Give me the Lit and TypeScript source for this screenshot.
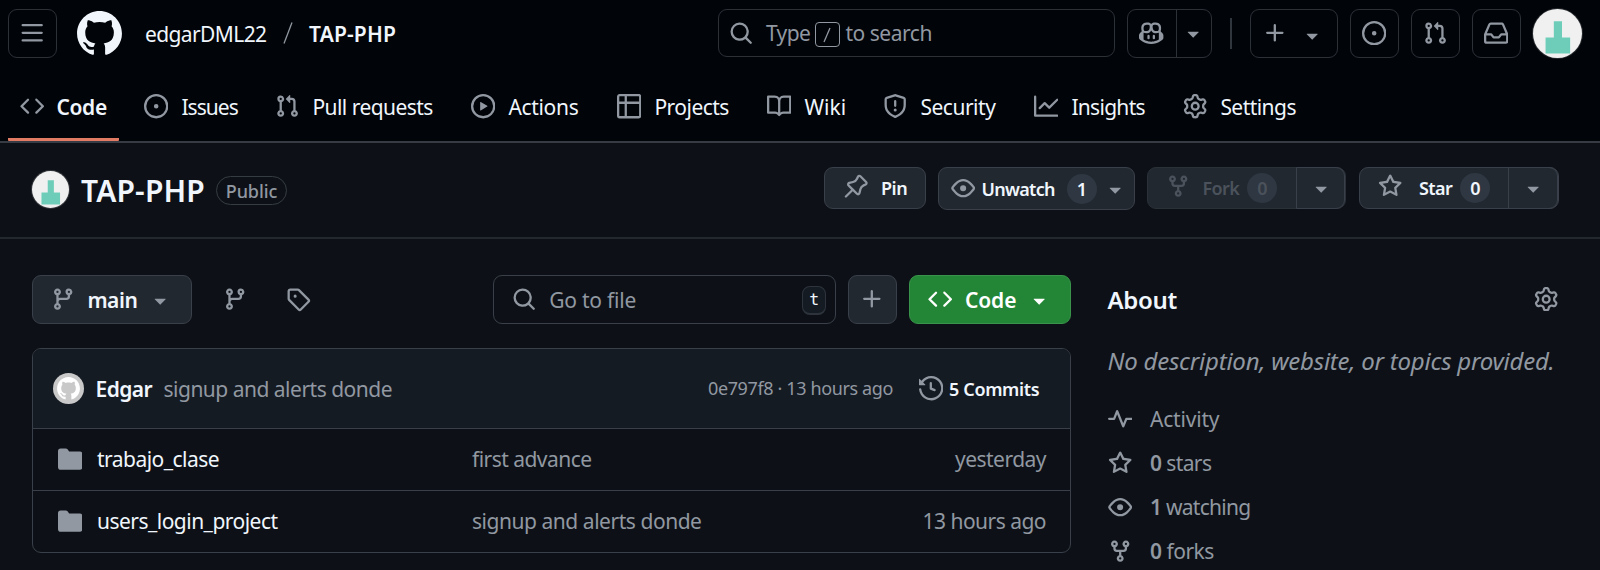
import { LitElement, html, css, svg } from "lit";
import { customElement, property } from "lit/decorators.js";

const ICONS: Record<string, string> = {
  bars: "M1 2.75A.75.75 0 0 1 1.75 2h12.5a.75.75 0 0 1 0 1.5H1.75A.75.75 0 0 1 1 2.75Zm0 5A.75.75 0 0 1 1.75 7h12.5a.75.75 0 0 1 0 1.5H1.75A.75.75 0 0 1 1 7.75ZM1.75 12h12.5a.75.75 0 0 1 0 1.5H1.75a.75.75 0 0 1 0-1.5Z",
  search: "M10.68 11.74a6 6 0 0 1-7.922-8.982 6 6 0 0 1 8.982 7.922l3.04 3.04a.749.749 0 0 1-.326 1.275.749.749 0 0 1-.734-.215ZM11.5 7a4.499 4.499 0 1 0-8.997 0A4.499 4.499 0 0 0 11.5 7Z",
  copilot: "M7.998 15.035c-4.562 0-7.873-2.914-7.998-3.749V9.338c.085-.628.677-1.686 1.588-2.065.013-.07.024-.143.036-.218.029-.183.06-.384.126-.612-.201-.508-.254-1.084-.254-1.656 0-.87.128-1.769.693-2.484.579-.733 1.494-1.124 2.724-1.261 1.206-.134 2.262.034 2.944.765.05.053.096.108.139.165.044-.057.094-.112.143-.165.682-.731 1.738-.899 2.944-.765 1.23.137 2.145.528 2.724 1.261.566.715.693 1.614.693 2.484 0 .572-.053 1.148-.254 1.656.066.228.098.429.126.612.012.076.024.148.037.218.924.385 1.522 1.471 1.591 2.095v1.872c0 .766-3.351 3.795-8.002 3.795Zm0-1.485c2.28 0 4.584-1.11 5.002-1.433V7.862l-.023-.116c-.49.21-1.075.291-1.727.291-1.146 0-2.059-.327-2.71-.991A3.222 3.222 0 0 1 8 6.303a3.24 3.24 0 0 1-.544.743c-.65.664-1.563.991-2.71.991-.652 0-1.236-.081-1.727-.291l-.023.116v4.255c.419.323 2.722 1.433 5.002 1.433ZM6.762 2.83c-.193-.206-.637-.413-1.682-.297-1.019.113-1.479.404-1.713.7-.247.312-.369.789-.369 1.554 0 .793.129 1.171.308 1.371.162.181.519.379 1.442.379.853 0 1.339-.235 1.638-.54.315-.322.527-.827.617-1.553.117-.935-.037-1.395-.241-1.614Zm4.155-.297c-1.044-.116-1.488.091-1.681.297-.204.219-.359.679-.242 1.614.091.726.303 1.231.618 1.553.299.305.784.54 1.638.54.922 0 1.28-.198 1.442-.379.179-.2.308-.578.308-1.371 0-.765-.123-1.242-.37-1.554-.233-.296-.693-.587-1.713-.7ZM6.25 9.037a.75.75 0 0 1 .75.75v1.501a.75.75 0 0 1-1.5 0V9.787a.75.75 0 0 1 .75-.75Zm4.25.75v1.501a.75.75 0 0 1-1.5 0V9.787a.75.75 0 0 1 1.5 0Z",
  caret: "m4.427 7.427 3.396 3.396a.25.25 0 0 0 .354 0l3.396-3.396A.25.25 0 0 0 11.396 7H4.604a.25.25 0 0 0-.177.427Z",
  plus: "M7.75 2a.75.75 0 0 1 .75.75V7h4.25a.75.75 0 0 1 0 1.5H8.5v4.25a.75.75 0 0 1-1.5 0V8.5H2.75a.75.75 0 0 1 0-1.5H7V2.75A.75.75 0 0 1 7.75 2Z",
  issue: "M8 9.5a1.5 1.5 0 1 0 0-3 1.5 1.5 0 0 0 0 3ZM8 0a8 8 0 1 1 0 16A8 8 0 0 1 8 0ZM1.5 8a6.5 6.5 0 1 0 13 0 6.5 6.5 0 0 0-13 0Z",
  pr: "M1.5 3.25a2.25 2.25 0 1 1 3 2.122v5.256a2.251 2.251 0 1 1-1.5 0V5.372A2.25 2.25 0 0 1 1.5 3.25Zm5.677-.177L9.573.677A.25.25 0 0 1 10 .854V2.5h1A2.5 2.5 0 0 1 13.5 5v5.628a2.251 2.251 0 1 1-1.5 0V5a1 1 0 0 0-1-1h-1v1.646a.25.25 0 0 1-.427.177L7.177 3.427a.25.25 0 0 1 0-.354ZM3.75 2.5a.75.75 0 1 0 0 1.5.75.75 0 0 0 0-1.5Zm0 9.5a.75.75 0 1 0 0 1.5.75.75 0 0 0 0-1.5Zm8.25.75a.75.75 0 1 0 1.5 0 .75.75 0 0 0-1.5 0Z",
  inbox: "M2.8 2.06A1.75 1.75 0 0 1 4.41 1h7.18c.7 0 1.333.417 1.61 1.06l2.74 6.395c.04.093.06.194.06.295v4.5A1.75 1.75 0 0 1 14.25 15H1.75A1.75 1.75 0 0 1 0 13.25v-4.5c0-.101.02-.202.06-.295Zm1.61.44a.25.25 0 0 0-.23.152L1.887 8H4.75a.75.75 0 0 1 .6.3L6.625 10h2.75l1.275-1.7a.75.75 0 0 1 .6-.3h2.863L11.82 2.652a.25.25 0 0 0-.23-.152Zm10.09 7h-2.875l-1.275 1.7a.75.75 0 0 1-.6.3h-3.5a.75.75 0 0 1-.6-.3L4.375 9.5H1.5v3.75c0 .138.112.25.25.25h12.5a.25.25 0 0 0 .25-.25Z",
  code: "m11.28 3.22 4.25 4.25a.75.75 0 0 1 0 1.06l-4.25 4.25a.749.749 0 0 1-1.275-.326.749.749 0 0 1 .215-.734L13.94 8l-3.72-3.72a.749.749 0 0 1 .326-1.275.749.749 0 0 1 .734.215Zm-6.56 0a.751.751 0 0 1 1.042.018.751.751 0 0 1 .018 1.042L2.06 8l3.72 3.72a.749.749 0 0 1-.326 1.275.749.749 0 0 1-.734-.215L.47 8.53a.75.75 0 0 1 0-1.06Z",
  play: "M8 0a8 8 0 1 1 0 16A8 8 0 0 1 8 0ZM1.5 8a6.5 6.5 0 1 0 13 0 6.5 6.5 0 0 0-13 0Zm4.879-2.773 4.264 2.559a.25.25 0 0 1 0 .428l-4.264 2.559A.25.25 0 0 1 6 10.559V5.442a.25.25 0 0 1 .379-.215Z",
  table: "M0 1.75C0 .784.784 0 1.75 0h12.5C15.216 0 16 .784 16 1.75v12.5A1.75 1.75 0 0 1 14.25 16H1.75A1.75 1.75 0 0 1 0 14.25ZM6.5 6.5v8h7.75a.25.25 0 0 0 .25-.25V6.5Zm8-1.5V1.75a.25.25 0 0 0-.25-.25H6.5V5Zm-13 1.5v7.75c0 .138.112.25.25.25H5v-8ZM5 5V1.5H1.75a.25.25 0 0 0-.25.25V5Z",
  book: "M0 1.75A.75.75 0 0 1 .75 1h4.253c1.227 0 2.317.59 3 1.501A3.743 3.743 0 0 1 11.006 1h4.245a.75.75 0 0 1 .75.75v10.5a.75.75 0 0 1-.75.75h-4.507a2.25 2.25 0 0 0-1.591.659l-.622.621a.75.75 0 0 1-1.06 0l-.622-.621A2.25 2.25 0 0 0 5.258 13H.75a.75.75 0 0 1-.75-.75Zm7.251 10.324.004-5.073-.002-2.253A2.25 2.25 0 0 0 5.003 2.5H1.5v9h3.757a3.75 3.75 0 0 1 1.994.574ZM8.755 4.75l-.004 7.322a3.752 3.752 0 0 1 1.992-.572H14.5v-9h-3.495a2.25 2.25 0 0 0-2.25 2.25Z",
  shield: "M7.467.133a1.748 1.748 0 0 1 1.066 0l5.25 1.68A1.75 1.75 0 0 1 15 3.48V7c0 1.566-.32 3.182-1.303 4.682-.983 1.498-2.585 2.813-5.032 3.855a1.697 1.697 0 0 1-1.33 0c-2.447-1.042-4.049-2.357-5.032-3.855C1.32 10.182 1 8.566 1 7V3.48a1.75 1.75 0 0 1 1.217-1.667Zm.61 1.429a.25.25 0 0 0-.153 0l-5.25 1.68a.25.25 0 0 0-.174.238V7c0 1.358.275 2.666 1.057 3.86.784 1.194 2.121 2.34 4.366 3.297a.196.196 0 0 0 .154 0c2.245-.956 3.582-2.104 4.366-3.298C13.225 9.666 13.5 8.36 13.5 7V3.48a.251.251 0 0 0-.174-.237l-5.25-1.68ZM8.75 4.75v3a.75.75 0 0 1-1.5 0v-3a.75.75 0 0 1 1.5 0ZM9 10.5a1 1 0 1 1-2 0 1 1 0 0 1 2 0Z",
  graph: "M1.5 1.75V13.5h13.75a.75.75 0 0 1 0 1.5H.75a.75.75 0 0 1-.75-.75V1.75a.75.75 0 0 1 1.5 0Zm14.28 2.53-5.25 5.25a.75.75 0 0 1-1.06 0L7 7.06 4.28 9.78a.751.751 0 0 1-1.042-.018.751.751 0 0 1-.018-1.042l3.25-3.25a.75.75 0 0 1 1.06 0L10 7.94l4.72-4.72a.751.751 0 0 1 1.042.018.751.751 0 0 1 .018 1.042Z",
  gear: "M8 0a8.2 8.2 0 0 1 .701.031C9.444.095 9.99.645 10.16 1.29l.288 1.107c.018.066.079.158.212.224.231.114.454.243.668.386.123.082.233.09.299.071l1.103-.303c.644-.176 1.392.021 1.82.63.27.385.506.792.704 1.218.315.675.111 1.422-.364 1.891l-.814.806c-.049.048-.098.147-.088.294.016.257.016.515 0 .772-.01.147.038.246.088.294l.814.806c.475.469.679 1.216.364 1.891a7.977 7.977 0 0 1-.704 1.217c-.428.61-1.176.807-1.82.63l-1.102-.302c-.067-.019-.177-.011-.3.071a5.909 5.909 0 0 1-.668.386c-.133.066-.194.158-.211.224l-.29 1.106c-.168.646-.715 1.196-1.458 1.26a8.006 8.006 0 0 1-1.402 0c-.743-.064-1.289-.614-1.458-1.26l-.289-1.106c-.018-.066-.079-.158-.212-.224a5.738 5.738 0 0 1-.668-.386c-.123-.082-.233-.09-.299-.071l-1.103.303c-.644.176-1.392-.021-1.82-.63a8.12 8.12 0 0 1-.704-1.218c-.315-.675-.111-1.422.363-1.891l.815-.806c.05-.048.098-.147.088-.294a6.214 6.214 0 0 1 0-.772c.01-.147-.038-.246-.088-.294l-.815-.806C.635 6.045.431 5.298.746 4.623a7.92 7.92 0 0 1 .704-1.217c.428-.61 1.176-.807 1.82-.63l1.102.302c.067.019.177.011.3-.071.214-.143.437-.272.668-.386.133-.066.194-.158.211-.224l.29-1.106C6.009.645 6.556.095 7.299.03 7.53.01 7.764 0 8 0Zm-.571 1.525c-.036.003-.108.036-.137.146l-.289 1.105c-.147.561-.549.967-.998 1.189-.173.086-.34.183-.5.29-.417.278-.97.423-1.529.27l-1.103-.303c-.109-.03-.175.016-.195.045-.22.312-.412.644-.573.99-.014.031-.021.11.059.19l.815.806c.411.406.562.957.53 1.456a4.709 4.709 0 0 0 0 .582c.032.499-.119 1.05-.53 1.456l-.815.806c-.081.08-.073.159-.059.19.162.346.353.677.573.989.02.03.085.076.195.046l1.102-.303c.56-.153 1.113-.008 1.53.27.161.107.328.204.501.29.447.222.85.629.997 1.189l.289 1.105c.029.109.101.143.137.146a6.6 6.6 0 0 0 1.142 0c.036-.003.108-.036.137-.146l.289-1.105c.147-.561.549-.967.998-1.189.173-.086.34-.183.5-.29.417-.278.97-.423 1.529-.27l1.103.303c.109.029.175-.016.195-.045.22-.313.411-.644.573-.99.014-.031.021-.11-.059-.19l-.815-.806c-.411-.406-.562-.957-.53-1.456a4.709 4.709 0 0 0 0-.582c-.032-.499.119-1.05.53-1.456l.815-.806c.081-.08.073-.159.059-.19a6.464 6.464 0 0 0-.573-.989c-.02-.03-.085-.076-.195-.046l-1.102.303c-.56.153-1.113.008-1.53-.27a4.44 4.44 0 0 0-.501-.29c-.447-.222-.85-.629-.997-1.189l-.289-1.105c-.029-.11-.101-.143-.137-.146a6.6 6.6 0 0 0-1.142 0ZM11 8a3 3 0 1 1-6 0 3 3 0 0 1 6 0ZM9.5 8a1.5 1.5 0 1 0-3.001.001A1.5 1.5 0 0 0 9.5 8Z",
  pin: "m11.294.984 3.722 3.722a1.75 1.75 0 0 1-.504 2.826l-1.327.613a3.089 3.089 0 0 0-1.707 2.084l-.584 2.454c-.317 1.332-1.972 1.8-2.94.832L5.75 11.311 1.78 15.28a.749.749 0 1 1-1.06-1.06l3.969-3.97-2.204-2.204c-.968-.968-.5-2.623.832-2.94l2.454-.584a3.08 3.08 0 0 0 2.084-1.707l.613-1.327a1.75 1.75 0 0 1 2.826-.504ZM6.283 9.723l2.732 2.731a.25.25 0 0 0 .42-.119l.584-2.454a4.586 4.586 0 0 1 2.537-3.098l1.328-.613a.25.25 0 0 0 .072-.404l-3.722-3.722a.25.25 0 0 0-.404.072l-.613 1.328a4.584 4.584 0 0 1-3.098 2.537l-2.454.584a.25.25 0 0 0-.119.42l2.731 2.732Z",
  eye: "M8 2c1.981 0 3.671.992 4.933 2.078 1.27 1.091 2.187 2.345 2.637 3.023a1.62 1.62 0 0 1 0 1.798c-.45.678-1.367 1.932-2.637 3.023C11.67 13.008 9.981 14 8 14c-1.981 0-3.671-.992-4.933-2.078C1.797 10.83.88 9.576.43 8.898a1.62 1.62 0 0 1 0-1.798c.45-.677 1.367-1.931 2.637-3.022C4.33 2.992 6.019 2 8 2ZM1.679 7.932a.12.12 0 0 0 0 .136c.411.622 1.241 1.75 2.366 2.717C5.176 11.758 6.527 12.5 8 12.5c1.473 0 2.825-.742 3.955-1.715 1.124-.967 1.954-2.096 2.366-2.717a.12.12 0 0 0 0-.136c-.412-.621-1.242-1.75-2.366-2.717C10.824 4.242 9.473 3.5 8 3.5c-1.473 0-2.825.742-3.955 1.715-1.124.967-1.954 2.096-2.366 2.717ZM8 10a2 2 0 1 1-.001-3.999A2 2 0 0 1 8 10Z",
  fork: "M5 5.372v.878c0 .414.336.75.75.75h4.5a.75.75 0 0 0 .75-.75v-.878a2.25 2.25 0 1 1 1.5 0v.878a2.25 2.25 0 0 1-2.25 2.25h-1.5v2.128a2.251 2.251 0 1 1-1.5 0V8.5h-1.5A2.25 2.25 0 0 1 3.5 6.25v-.878a2.25 2.25 0 1 1 1.5 0ZM5 3.25a.75.75 0 1 0-1.5 0 .75.75 0 0 0 1.5 0Zm6.75.75a.75.75 0 1 0 0-1.5.75.75 0 0 0 0 1.5Zm-3 8.75a.75.75 0 1 0-1.5 0 .75.75 0 0 0 1.5 0Z",
  star: "M8 .25a.75.75 0 0 1 .673.418l1.882 3.815 4.21.612a.75.75 0 0 1 .416 1.279l-3.046 2.97.719 4.192a.751.751 0 0 1-1.088.791L8 12.347l-3.766 1.98a.75.75 0 0 1-1.088-.79l.72-4.194L.818 6.374a.75.75 0 0 1 .416-1.28l4.21-.611L7.327.668A.75.75 0 0 1 8 .25Zm0 2.445L6.615 5.5a.75.75 0 0 1-.564.41l-3.097.45 2.24 2.184a.75.75 0 0 1 .216.664l-.528 3.084 2.769-1.456a.75.75 0 0 1 .698 0l2.77 1.456-.53-3.084a.75.75 0 0 1 .216-.664l2.24-2.183-3.096-.45a.75.75 0 0 1-.564-.41L8 2.694Z",
  branch: "M9.5 3.25a2.25 2.25 0 1 1 3 2.122V6A2.5 2.5 0 0 1 10 8.5H6a1 1 0 0 0-1 1v1.128a2.251 2.251 0 1 1-1.5 0V5.372a2.25 2.25 0 1 1 1.5 0v1.836A2.493 2.493 0 0 1 6 7h4a1 1 0 0 0 1-1v-.628A2.25 2.25 0 0 1 9.5 3.25Zm-6 0a.75.75 0 1 0 1.5 0 .75.75 0 0 0-1.5 0Zm8.25-.75a.75.75 0 1 0 0 1.5.75.75 0 0 0 0-1.5ZM4.25 12a.75.75 0 1 0 0 1.5.75.75 0 0 0 0-1.5Z",
  tag: "M1 7.775V2.75C1 1.784 1.784 1 2.75 1h5.025c.464 0 .91.184 1.238.513l6.25 6.25a1.75 1.75 0 0 1 0 2.474l-5.026 5.026a1.75 1.75 0 0 1-2.474 0l-6.25-6.25A1.752 1.752 0 0 1 1 7.775Zm1.5 0c0 .066.026.13.073.177l6.25 6.25a.25.25 0 0 0 .354 0l5.025-5.025a.25.25 0 0 0 0-.354l-6.25-6.25a.25.25 0 0 0-.177-.073H2.75a.25.25 0 0 0-.25.25ZM6 5a1 1 0 1 1 0 2 1 1 0 0 1 0-2Z",
  history: "m.427 1.927 1.215 1.215a8.002 8.002 0 1 1-1.6 5.685.75.75 0 1 1 1.493-.154 6.5 6.5 0 1 0 1.18-4.458l1.358 1.358A.25.25 0 0 1 3.896 6H.25A.25.25 0 0 1 0 5.75V2.104a.25.25 0 0 1 .427-.177ZM7.75 4a.75.75 0 0 1 .75.75v2.992l2.028.812a.75.75 0 0 1-.557 1.392l-2.5-1A.751.751 0 0 1 7 8.25v-3.5A.75.75 0 0 1 7.75 4Z",
  folder: "M1.75 1A1.75 1.75 0 0 0 0 2.75v10.5C0 14.216.784 15 1.75 15h12.5A1.75 1.75 0 0 0 16 13.25v-8.5A1.75 1.75 0 0 0 14.25 3H7.5a.25.25 0 0 1-.2-.1l-.9-1.2C6.07 1.26 5.55 1 5 1H1.75Z",
  pulse: "M6 2c.306 0 .582.187.696.471L10 10.731l1.304-3.26A.751.751 0 0 1 12 7h3.25a.75.75 0 0 1 0 1.5h-2.742l-1.812 4.528a.751.751 0 0 1-1.392 0L6 4.77 4.696 8.03A.75.75 0 0 1 4 8.5H.75a.75.75 0 0 1 0-1.5h2.742l1.812-4.529A.751.751 0 0 1 6 2Z",
};
const MARK =
  "M12 1C5.9225 1 1 5.9225 1 12C1 16.8675 4.14875 20.9787 8.52125 22.4362C9.07125 22.5325 9.2775 22.2025 9.2775 21.9137C9.2775 21.6525 9.26375 20.7862 9.26375 19.865C6.5 20.3737 5.785 19.1912 5.565 18.5725C5.44125 18.2562 4.905 17.28 4.4375 17.0187C4.0525 16.8125 3.5025 16.3037 4.42375 16.29C5.29 16.2762 5.90875 17.0875 6.115 17.4175C7.105 19.0812 8.68625 18.6137 9.31875 18.325C9.415 17.61 9.70375 17.1287 10.02 16.8537C7.5725 16.5787 5.015 15.63 5.015 11.4225C5.015 10.2262 5.44125 9.23625 6.1425 8.46625C6.0325 8.19125 5.6475 7.06375 6.2525 5.55125C6.2525 5.55125 7.17375 5.2625 9.2775 6.67875C10.1575 6.43125 11.0925 6.3075 12.0275 6.3075C12.9625 6.3075 13.8975 6.43125 14.7775 6.67875C16.8813 5.24875 17.8025 5.55125 17.8025 5.55125C18.4075 7.06375 18.0225 8.19125 17.9125 8.46625C18.6138 9.23625 19.04 10.2125 19.04 11.4225C19.04 15.6437 16.4688 16.5787 14.0213 16.8537C14.42 17.1975 14.7638 17.8575 14.7638 18.8887C14.7638 20.36 14.75 21.5425 14.75 21.9137C14.75 22.2025 14.9563 22.5462 15.5063 22.4362C19.8513 20.9787 23 16.8537 23 12C23 5.9225 18.0775 1 12 1Z";

/* 24px octicon */
@customElement("gh-icon")
class GhIcon extends LitElement {
  @property() name = "";
  static styles = css`
    :host { display: block; flex: none; width: 24.4px; height: 24.4px; color: #9198a1; }
    .glyph { display: block; width: 100%; height: 100%; fill: currentColor; }
  `;
  render() {
    return html`<svg class="glyph" viewBox="0 0 16 16">${svg`<path d=${ICONS[this.name]}></path>`}</svg>`;
  }
}

/* One line of text, tracked so that it fills exactly the width it is given */
@customElement("gh-text")
class GhText extends LitElement {
  @property({ type: Number }) w = 0;
  static styles = css`
    :host { display: block; flex: none; white-space: nowrap; }
    .run { display: inline-block; }
  `;
  render() {
    return html`<span class="run"><slot></slot></span>`;
  }
  firstUpdated() {
    const run = this.renderRoot.querySelector(".run") as HTMLElement;
    const count = (this.textContent ?? "").trim().length;
    const natural = run.getBoundingClientRect().width;
    this.style.width = `${this.w}px`;
    if (count > 1) run.style.letterSpacing = `${(this.w - natural) / count}px`;
  }
}

@customElement("gh-avatar")
class GhAvatar extends LitElement {
  static styles = css`
    :host { display: block; flex: none; border-radius: 50%; overflow: hidden; background: #f0f0f0; box-shadow: 0 0 0 1px #ffffff26; }
    .pic { display: block; width: 100%; height: 100%; }
  `;
  render() {
    return html`<svg class="pic" viewBox="0 0 48 48">
      <path fill="#6ecdb9" d="M20.4 12h8v16h8v15.6H12.3V28h8.1Z"></path>
    </svg>`;
  }
}

const icon = (name: string, cls = "") => html`<gh-icon class=${cls} name=${name}></gh-icon>`;

const TABS = [
  { icon: "code", label: "Code", w: 50.5, on: true },
  { icon: "issue", label: "Issues", w: 56.5 },
  { icon: "pr", label: "Pull requests", w: 120.5 },
  { icon: "play", label: "Actions", w: 70 },
  { icon: "table", label: "Projects", w: 74.5 },
  { icon: "book", label: "Wiki", w: 42 },
  { icon: "shield", label: "Security", w: 75 },
  { icon: "graph", label: "Insights", w: 73.5 },
  { icon: "gear", label: "Settings", w: 75.5 },
];
const FILES = [
  { name: "trabajo_clase", nw: 122, msg: "first advance", mw: 119.5, age: "yesterday", aw: 91 },
  { name: "users_login_project", nw: 180.5, msg: "signup and alerts donde", mw: 229.5, age: "13 hours ago", aw: 123.5 },
];

@customElement("app-root")
class AppRoot extends LitElement {
  static styles = css`
    * { box-sizing: border-box; }
    :host {
      display: block; width: 1600px; height: 570px; overflow: hidden;
      background: #0d1117; color: #f0f6fc;
      font: 400 21px/30px "Noto Sans", "Open Sans", sans-serif;
    }
    .muted { color: #9198a1; }
    .semi { font-weight: 600; }
    .sm { font-size: 18px; line-height: 26px; }

    .top { height: 143px; background: #010409; border-bottom: 2px solid #363b44; display: flex; flex-direction: column; }
    .bar { height: 66px; display: flex; align-items: center; padding-left: 8px; }
    .box { height: 49px; border: 1px solid #2c3138; border-radius: 9px; display: flex; align-items: center; justify-content: center; flex: none; }
    .sq { width: 49px; }
    .mark { width: 49px; height: 49px; margin: 0 0 0 18px; fill: #f0f6fc; flex: none; }
    .owner { margin: 1px 0 0 21px; }
    .slash { margin-left: 16.5px; width: 10px; height: 22px; stroke: #9198a1; stroke-width: 1.3; flex: none; }
    .repo { margin: 1px 0 0 16px; }
    .search { width: 397px; height: 48px; margin: 0 12px 0 321.5px; justify-content: flex-start; padding-left: 10.5px; }
    .type { margin-left: 12.5px; }
    .slashkey { width: 25px; height: 25px; margin: 3px 5.5px 0 4.5px; border: 1px solid #9198a1; border-radius: 4px; display: flex; align-items: center; justify-content: center; flex: none; }
    .slashkey svg { width: 8px; height: 16px; stroke: #9198a1; stroke-width: 1.3; }
    .copilot { width: 85px; justify-content: flex-start; }
    .half { width: 49px; height: 100%; border-right: 1px solid #2c3138; display: flex; align-items: center; justify-content: center; }
    .copilot-caret { margin-left: 4.5px; }
    .rule { width: 2px; height: 31px; background: #30363d; margin: 0 18px 0 18px; flex: none; }
    .new { width: 88px; margin-right: 12px; gap: 12.5px; }
    .new-caret { margin-top: 4px; }
    .act { margin-right: 12px; }
    .me { width: 49px; height: 49px; }

    .tabs { flex: 1; padding-left: 8px; display: grid; grid-template-columns: 124px 131px 196px 146px 150px 116px 151px 149px 170px; }
    .tab { display: flex; padding: 28.3px 0 0 12px; }
    .tab-text { margin: -2px 0 0 13px; }
    .tab.on { width: 111px; border-bottom: 3px solid #e27b64; border-radius: 1px; }
    .tab.on .tab-text { margin-left: 12px; }

    .head { height: 96px; border-bottom: 2px solid #23282f; display: flex; align-items: flex-start; padding: 24px 0 0 32px; }
    .av { width: 37px; height: 37px; margin-top: 4px; }
    .title { font-size: 30px; line-height: 40px; margin: 4px 0 0 12px; }
    .pill { width: 71px; height: 29px; margin: 9px 0 0 11px; border: 1px solid #363c44; border-radius: 15px; display: flex; align-items: center; justify-content: center; font-weight: 500; font-size: 18px; line-height: 26px; }
    .btn { height: 42px; border: 1px solid #3a4049; border-radius: 9px; background: #212830; display: flex; align-items: center; flex: none; font-weight: 600; font-size: 18px; line-height: 26px; }
    .num { width: 30px; height: 30px; border-radius: 15px; background: #2f3742; display: flex; align-items: center; justify-content: center; line-height: 28px; flex: none; }
    .pin { width: 102px; margin-left: 537px; padding-left: 19px; }
    .pin .t { margin-left: 12.5px; }
    .watch { width: 197px; height: 43px; margin-left: 12px; padding-left: 12px; }
    .watch .t { margin-left: 6px; }
    .watch .num { margin-left: 12px; }
    .watch .c { margin: 1px 0 0 6.5px; }
    .forkb { width: 199px; margin-left: 12px; border-color: #2b3139; }
    .forkb .l { width: 149px; height: 42px; padding-left: 18px; display: flex; align-items: center; color: #4b525b; }
    .forkb .ic { color: #4b525b; }
    .forkb .t { margin-left: 12px; }
    .l .num { margin: 0 0 0 8px; line-height: 28px; padding-bottom: 1px; }
    .r { height: 42px; width: 50px; border: 1px solid #3a4049; border-radius: 0 9px 9px 0; display: flex; align-items: center; justify-content: center; padding-left: 1px; }
    .starb { width: 200px; margin-left: 12.5px; border-color: #3a4049; }
    .starb .l { width: 149.5px; height: 42px; padding-left: 18px; display: flex; align-items: center; }
    .starb .t { margin-left: 17px; }
    .ic-up { margin-top: -3px; }

    .body { display: flex; padding-left: 32px; }
    .main { width: 1039px; padding-top: 36px; }
    .tools { display: flex; align-items: center; height: 49px; }
    .tbtn { height: 49px; border: 1px solid #3a4049; border-radius: 9px; background: #212830; display: flex; align-items: center; flex: none; }
    .branch { width: 160px; padding-left: 18px; }
    .branch .t { margin-left: 12px; }
    .branch .c { margin: 1px 0 0 10.5px; }
    .br { margin-left: 31px; }
    .tg { margin-left: 39px; }
    .goto { width: 343px; height: 49px; margin-left: 182.5px; border: 1px solid #3a4049; border-radius: 9px; display: flex; align-items: center; padding-left: 18px; }
    .goto .t { margin-left: 12.5px; }
    .key { width: 24px; height: 29px; margin: 2px 0 0 166px; border: 1px solid #2e343c; border-bottom-width: 2px; border-radius: 8px; background: #151b23; display: flex; align-items: center; justify-content: center; font: 16.5px/24px "DejaVu Sans Mono", monospace; flex: none; }
    .add { width: 49px; margin-left: 12px; justify-content: center; }
    .green { width: 162px; margin-left: 12px; background: #238636; border-color: #39934a; padding-left: 18px; color: #fff; }
    .green gh-icon { color: #fff; }
    .green .t { margin-left: 12.5px; }
    .green .c { margin: 1px 0 0 11px; }

    .files { margin-top: 24px; border: 1px solid #3a4049; border-radius: 9px; overflow: hidden; }
    .commit { height: 80px; background: #151b23; display: flex; align-items: center; padding-left: 20px; border-bottom: 1px solid #3a4049; }
    .face { width: 31px; height: 31px; border-radius: 50%; background: #c9c9c9; flex: none; padding: 3px; }
    .face svg { display: block; width: 25px; height: 25px; fill: #fff; }
    .author { margin: 1px 0 0 11.5px; }
    .msg { margin: 1px 0 0 11.5px; }
    .sha { margin: -1px 0 0 316px; }
    .hist { margin-left: 25.5px; }
    .count { margin: 1px 0 0 6px; }
    .row { height: 61px; display: grid; grid-template-columns: 24px 15px 375px 1fr auto; align-items: center; padding: 0 24px 0 25px; }
    .row gh-text { margin-top: -1px; }
    .row + .row { border-top: 1px solid #3a4049; height: 62px; }
    .row .c1 { grid-column: 3; }

    .side { flex: 1; padding: 47px 0 0 36.5px; }
    .about { display: flex; align-items: center; height: 28px; font-size: 24px; }
    .about .g { margin-left: 357px; margin-top: -1.5px; }
    .desc { font-style: italic; font-size: 24px; line-height: 34px; margin-top: 29.5px; }
    .facts { margin-top: 19.5px; display: grid; grid-auto-rows: 44.2px; }
    .fact { display: flex; align-items: center; gap: 18px; }
    .fact gh-text { margin-top: -1px; }
  `;

  render() {
    return html`
      <header class="top">
        <div class="bar">
          <div class="box sq">${icon("bars")}</div>
          <svg class="mark" viewBox="0 0 24 24"><path d=${MARK}></path></svg>
          <gh-text class="owner" w="121.5">edgarDML22</gh-text>
          <svg class="slash" viewBox="0 0 10 22"><path d="M1 21.5L9 .5"></path></svg>
          <gh-text class="repo semi" w="87">TAP-PHP</gh-text>
          <div class="box search">
            ${icon("search")}
            <gh-text class="type muted" w="44.5">Type</gh-text>
            <span class="slashkey"><svg viewBox="0 0 8 16"><path d="M1 15L7 1"></path></svg></span>
            <gh-text class="muted" w="86.5">to search</gh-text>
          </div>
          <div class="box copilot"><div class="half">${icon("copilot")}</div>${icon("caret", "copilot-caret")}</div>
          <span class="rule"></span>
          <div class="box new">${icon("plus")}${icon("caret", "new-caret")}</div>
          <div class="box sq act">${icon("issue")}</div>
          <div class="box sq act">${icon("pr")}</div>
          <div class="box sq act">${icon("inbox")}</div>
          <gh-avatar class="me"></gh-avatar>
        </div>
        <nav class="tabs">
          ${TABS.map((t) => html`<div class="tab ${t.on ? "on" : ""}">${icon(t.icon)}
            <gh-text class="tab-text ${t.on ? "semi" : ""}" w=${t.w}>${t.label}</gh-text></div>`)}
        </nav>
      </header>

      <section class="head">
        <gh-avatar class="av"></gh-avatar>
        <gh-text class="title semi" w="124">TAP-PHP</gh-text>
        <span class="pill muted"><gh-text w="51.5">Public</gh-text></span>
        <div class="btn pin">${icon("pin", "ic-up")}<gh-text class="t" w="26.5">Pin</gh-text></div>
        <div class="btn watch">${icon("eye")}<gh-text class="t" w="73.5">Unwatch</gh-text><span class="num">1</span>${icon("caret", "c")}</div>
        <div class="btn forkb">
          <div class="l">${icon("fork", "ic ic-up")}<gh-text class="t" w="37">Fork</gh-text><span class="num">0</span></div>
          <div class="r">${icon("caret")}</div>
        </div>
        <div class="btn starb">
          <div class="l">${icon("star", "ic-up")}<gh-text class="t" w="33.5">Star</gh-text><span class="num">0</span></div>
          <div class="r">${icon("caret")}</div>
        </div>
      </section>

      <div class="body">
        <main class="main">
          <div class="tools">
            <div class="tbtn branch">${icon("branch")}<gh-text class="t semi" w="50">main</gh-text>${icon("caret", "c")}</div>
            ${icon("branch", "br")}${icon("tag", "tg")}
            <div class="goto">${icon("search")}<gh-text class="t muted" w="87">Go to file</gh-text><span class="key">t</span></div>
            <div class="tbtn add">${icon("plus")}</div>
            <div class="tbtn green">${icon("code")}<gh-text class="t semi" w="51.5">Code</gh-text>${icon("caret", "c")}</div>
          </div>
          <div class="files">
            <div class="commit">
              <span class="face"><svg viewBox="0 0 24 24"><path d=${MARK}></path></svg></span>
              <gh-text class="author semi" w="56.5">Edgar</gh-text>
              <gh-text class="msg muted" w="228.5">signup and alerts donde</gh-text>
              <gh-text class="sha muted sm" w="185">0e797f8 · 13 hours ago</gh-text>
              ${icon("history", "hist")}
              <gh-text class="count semi sm" w="90.5">5 Commits</gh-text>
            </div>
            ${FILES.map((f) => html`<div class="row">
              ${icon("folder")}
              <gh-text class="c1" w=${f.nw}>${f.name}</gh-text>
              <gh-text class="muted" w=${f.mw}>${f.msg}</gh-text>
              <gh-text class="muted" w=${f.aw}>${f.age}</gh-text>
            </div>`)}
          </div>
        </main>
        <aside class="side">
          <div class="about"><gh-text class="semi" w="69.5">About</gh-text>${icon("gear", "g")}</div>
          <gh-text class="desc muted" w="447">No description, website, or topics provided.</gh-text>
          <div class="facts muted">
            <div class="fact">${icon("pulse")}<gh-text w="69.5">Activity</gh-text></div>
            <div class="fact">${icon("star")}<gh-text w="61.5"><b class="semi">0</b> stars</gh-text></div>
            <div class="fact">${icon("eye")}<gh-text w="100.5"><b class="semi">1</b> watching</gh-text></div>
            <div class="fact">${icon("fork")}<gh-text w="64"><b class="semi">0</b> forks</gh-text></div>
          </div>
        </aside>
      </div>
    `;
  }
}
